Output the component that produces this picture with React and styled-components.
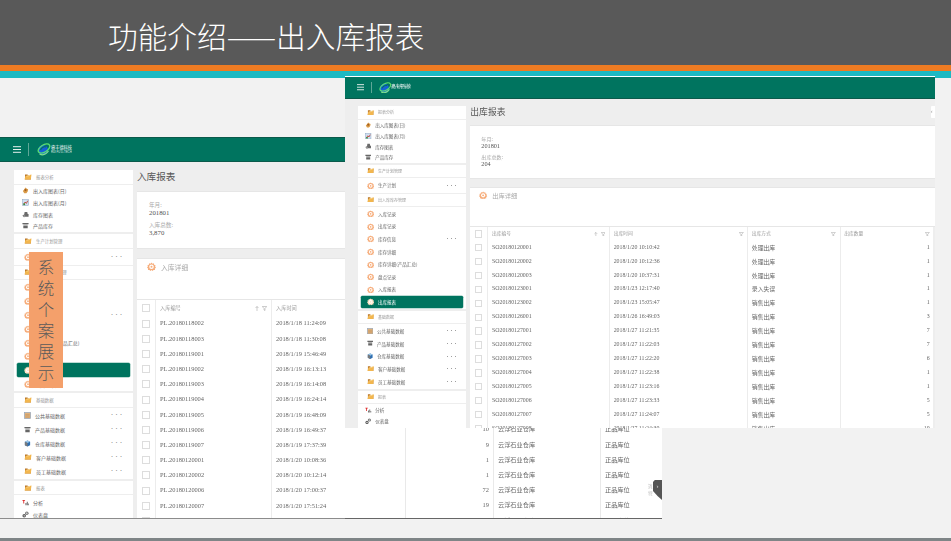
import React from "react";
import styled, { createGlobalStyle } from "styled-components";

const Global = createGlobalStyle`
  html, body { margin: 0; padding: 0; background: #f2f2f2; }
  body { width: 951px; height: 541px; overflow: hidden; font-family: "Noto Sans CJK SC", "Liberation Sans", sans-serif; }
`;

const CJK = `"Noto Sans CJK SC", "Liberation Sans", sans-serif`;
const SERIF = `"Liberation Serif", "Noto Sans CJK SC", serif`;

const Slide = styled.div`
  width: 951px; height: 541px; display: flex; flex-direction: column; background: #f2f2f2;
`;
const Banner = styled.header`
  height: 65px; flex: none; background: #595959; color: #fff; display: flex; align-items: center;
  padding: 0 0 0 108px; box-sizing: border-box;
`;
const SlideTitle = styled.h1`
  margin: 6px 0 0; font: 300 29.7px/1 ${CJK}; white-space: nowrap;
`;
const Stripe = styled.div`
  height: ${p => p.$h}px; flex: none; background: ${p => p.$c};
`;
const Canvas = styled.main`
  position: relative; height: 460px; flex: none;
`;
const Footer = styled.div`
  height: 3px; flex: none; background: #7f8587;
`;

/* A pasted screenshot on the slide */
const Shot = styled.section`
  position: absolute; left: ${p => p.$x}px; top: ${p => p.$y}px; width: ${p => p.$w}px; height: ${p => p.$h}px;
  overflow: hidden; filter: blur(0.3px); z-index: ${p => p.$z};
  box-sizing: border-box;
  border-top: ${p => p.$topLine || "none"};
  border-bottom: ${p => p.$bottomLine || "none"};
`;
const ShotInner = styled.div`
  zoom: ${p => p.$zoom}; width: ${p => p.$w}px; background: #eeeeee; min-height: 100%;
`;
const TopBar = styled.div`
  height: ${p => p.$h}px; background: #00745f; border-bottom: 1px solid #0b5a4b; box-sizing: border-box;
  display: flex; align-items: center; padding-left: 13px;
`;
const Divider = styled.span`
  width: 1px; height: 13px; background: #5fa797; margin: 0 7px 0 7px;
`;
const LogoText = styled.div`
  color: #fff; margin-left: 0; display: flex; flex-direction: column; gap: .5px;
`;
const LogoCn = styled.span` font-size: 4.2px; line-height: 4.6px; white-space: nowrap; `;
const LogoEn = styled.span` font: 2.8px/3px "Liberation Sans", sans-serif; white-space: nowrap; opacity: .85; `;

const Body = styled.div`
  display: flex; align-items: flex-start; padding: 8px 0 0 14px;
`;
const Sidebar = styled.aside`
  width: 118.5px; flex: none; display: flex; flex-direction: column;
`;
const GroupHead = styled.div`
  height: 13.5px; background: #fff; margin-bottom: 1px; display: flex; align-items: center; padding-left: 10px;
  color: #999; font-size: 4.4px; gap: 4px; white-space: nowrap;
`;
const GroupList = styled.ul`
  list-style: none; margin: 0 0 ${p => p.$gap}px; padding: ${p => p.$pad}px 0; background: #fff;
`;
const Item = styled.li`
  height: ${p => p.$h}px; display: flex; align-items: center; gap: 4px;
  padding: 0 9px 0 ${p => p.$tight ? 8 : 10}px; font-size: 5px; color: ${p => p.$active ? "#fff" : "#666"};
  white-space: nowrap; box-sizing: border-box;
  margin: 0 ${p => p.$active ? 3 : 0}px;
  ${p => p.$active && `background:#00745f; border-radius:1.5px; box-shadow:0 0 0 .5px #7db9ab; padding-left:7px;`}
`;
const ItemLabel = styled.span` flex: 1; `;
const Dots = styled.span`
  color: #444; font-size: 4px; letter-spacing: .5px; line-height: 1;
`;

const Main = styled.div`
  flex: 1; min-width: 0; margin-left: 4.5px; display: flex; flex-direction: column;
`;
const TitleRow = styled.div`
  height: 21px; display: flex; align-items: flex-start; justify-content: space-between;
`;
const PageTitle = styled.h2`
  margin: 1.5px 0 0; font: 400 9.6px/1 ${CJK}; color: #555;
`;
const Collapse = styled.span`
  width: 4.5px; height: 13px; background: #fff; border-radius: 1px 0 0 1px;
  font: 5px/13px "Liberation Sans", sans-serif; color: #888; overflow: hidden;
`;
const SummaryCard = styled.div`
  height: 58px; background: #fff; border: 1px solid #e6e6e6; border-width: 1px 0; box-sizing: border-box;
  padding: 9px 0 0 12px; margin-bottom: 9px;
`;
const FieldLabel = styled.div` font: 5.6px/8px ${CJK}; color: #aaa; `;
const FieldValue = styled.div` font: 6.8px/8px ${SERIF}; color: #555; margin-bottom: 4px; `;
const DetailHead = styled.div`
  height: ${p => p.$h}px; background: #fff; border-top: 1px solid #e6e6e6; border-bottom: 1px solid #e6e6e6; box-sizing: border-box;
  display: flex; align-items: flex-start; gap: 5px; padding: 3px 0 0 10px;
  font: 6.8px/10px ${CJK}; color: #aaa;
`;
const Table = styled.div` margin-right: 2px; background: #fff; `;
const Row = styled.div`
  display: grid; grid-template-columns: ${p => p.$cols}; height: ${p => p.$h}px;
`;
const Cell = styled.div`
  border-left: 1px solid #ececec; display: flex; align-items: center; gap: 2px; min-width: 0;
  padding: 0 4px; box-sizing: border-box; white-space: nowrap;
  font: 6.4px/1 ${p => p.$cjk ? CJK : SERIF}; color: #666;
  justify-content: ${p => p.$right ? "flex-end" : "flex-start"};
  &:first-child { border-left: none; padding: 0; justify-content: center; }
`;
const HeadCell = styled(Cell)`
  font: 5.2px/1 ${CJK}; color: #999; justify-content: space-between;
`;
const HeadTools = styled.span` display: flex; align-items: center; gap: 3px; `;
const Check = styled.span`
  width: 8px; height: 8px; background: #fff; border: .7px solid #ddd; box-sizing: border-box;
`;

const Callout = styled.aside`
  position: absolute; left: 29px; top: 174px; width: 34px; height: 136px; z-index: 5;
  background: #f4a06b; color: #5a5a5a; box-sizing: border-box; padding-top: 5px;
  display: flex; flex-direction: column; align-items: center;
  font: 300 16.5px/21px ${CJK};
`;

const StockTable = styled.div` margin-top: -6px; `;
const StockRow = styled.div`
  display: grid; grid-template-columns: 60px 88px 107px 62px; height: 15.2px;
`;
const StockCell = styled.div`
  border-left: ${p => p.$first ? "none" : "1px solid #e9e9e9"}; box-sizing: border-box; white-space: nowrap;
  display: flex; align-items: center; padding: 0 4px; color: #666;
  font: ${p => p.$cjk ? `6.2px/1 ${CJK}` : `6.4px/1 ${SERIF}`};
  justify-content: ${p => p.$right ? "flex-end" : "flex-start"};
`;
const PanelBody = styled.div` background: #fff; height: 100%; position: relative; overflow: hidden; `;
const HelpTab = styled.div`
  position: absolute; right: 0; top: 52px; width: 9px; height: 20px; background: #555;
  clip-path: polygon(20% 0, 100% 0, 100% 100%, 50% 80%, 0 55%, 0 10%);
  color: #ddd; font: 6px/12px "Liberation Sans", sans-serif; text-align: center;
`;
const HelpHint = styled.div`
  position: absolute; right: 9px; top: 55px; color: #bbb; font: 4.5px/7px ${CJK}; width: 5px; overflow: hidden;
  white-space: nowrap;
`;

const Gear = ({ c = "#f6ad7b", s = 8 }) => (
  <svg width={s} height={s} viewBox="0 0 16 16" style={{ flex: "none" }}>
    <path d="M8 1l1.6 2 2.5-.7.6 2.5 2.5.8-.8 2.4 1.6 2-2 1.6.2 2.6-2.6.2L10 16 8 14.4 6 16l-1.6-1.600-2.600-.2.2-2.600-2-1.600 1.600-2-.8-2.400 2.500-.8.6-2.500L6.400 3z" fill={c} />
    <circle cx="8" cy="8.500" r="4" fill="#fff" />
    <circle cx="8" cy="8.500" r="1.800" fill={c} />
  </svg>
);
const Folder = ({ s = 8 }) => (
  <svg width={s} height={s} viewBox="0 0 16 16" style={{ flex: "none" }}>
    <path d="M2 3h5l1 1.500h6V13H2z" fill="#b9772a" />
    <path d="M3 6l12-3-1.500 10H1z" fill="#f2b64e" />
    <path d="M5 6.500l7-1.800" stroke="#fff3cf" strokeWidth="1" />
  </svg>
);
const Cube = () => (
  <svg width="7" height="7" viewBox="0 0 16 16" style={{ flex: "none" }}>
    <path d="M8 1l6 3v8l-6 3-6-3V4z" fill="#2d6fb3" />
    <path d="M8 1l6 3-6 3-6-3z" fill="#9cc7e8" />
    <path d="M2 4l6 3v8l-6-3z" fill="#7a7a7a" />
  </svg>
);
const Shelf = () => (
  <svg width="7" height="7" viewBox="0 0 16 16" style={{ flex: "none" }}>
    <path d="M1 2h14v3H1zM3 6h10v2H3zM3 9h10v5H3z" fill="#666" />
  </svg>
);
const Chart = () => (
  <svg width="7" height="7" viewBox="0 0 16 16" style={{ flex: "none" }}>
    <rect x="1" y="1" width="14" height="14" fill="#cfe0f2" stroke="#7f9ab8" />
    <path d="M4 12l3-5 3 3 3-6" stroke="#c0392b" strokeWidth="2" fill="none" />
    <rect x="3" y="10" width="4" height="4" fill="#3c8d40" />
  </svg>
);
const Ledger = () => (
  <svg width="7" height="7" viewBox="0 0 16 16" style={{ flex: "none" }}>
    <rect x="1" y="1" width="14" height="14" fill="#e0b27c" stroke="#8fa4bd" strokeWidth="1.500" />
    <path d="M3 6h10M3 9h10M3 12h10" stroke="#b98a55" />
  </svg>
);
const Cookie = () => (
  <svg width="7" height="7" viewBox="0 0 16 16" style={{ flex: "none" }}>
    <path d="M8 1l3 3 3 1-1 5-3 4H5L2 9l2-2z" fill="#d99a46" />
    <circle cx="8" cy="7" r="2.500" fill="#a35f22" />
  </svg>
);
const Pour = () => (
  <svg width="7" height="7" viewBox="0 0 16 16" style={{ flex: "none" }}>
    <path d="M6 2h6l1 5h2v6H3l-2-3 4-2z" fill="#6b6b6b" />
    <circle cx="5" cy="12" r="2.500" fill="#999" />
  </svg>
);
const Tally = () => (
  <svg width="7" height="7" viewBox="0 0 16 16" style={{ flex: "none" }}>
    <path d="M1 2h6v2H5v6H3V4H1z" fill="#d22" />
    <path d="M8 14V9h2v5zM11 14V6h2v8zM14 14v-4h1.500v4z" fill="#555" />
  </svg>
);
const Dash = () => (
  <svg width="7" height="7" viewBox="0 0 16 16" style={{ flex: "none" }}>
    <circle cx="5" cy="11" r="4" fill="#555" />
    <circle cx="11" cy="5" r="4" fill="#777" />
    <circle cx="5" cy="11" r="1.500" fill="#fff" />
    <circle cx="11" cy="5" r="1.500" fill="#fff" />
  </svg>
);
const Funnel = () => (
  <svg width="5" height="5" viewBox="0 0 10 10"><path d="M.5 1h9L6 5v4L4 8V5z" fill="none" stroke="#999" /></svg>
);
const SortUp = () => (
  <svg width="4" height="5" viewBox="0 0 8 10"><path d="M4 10V1M1 4l3-3 3 3" fill="none" stroke="#999" /></svg>
);
const Burger = () => (
  <svg width="8" height="7" viewBox="0 0 8 7" style={{ flex: "none" }}>
    <path d="M0 .7h8M0 3.500h8M0 6.300h8" stroke="#e8f1ee" strokeWidth="1" />
  </svg>
);
const Logo = () => (
  <svg width="15" height="13" viewBox="0 0 30 26" style={{ flex: "none" }}>
    <circle cx="14" cy="14" r="10" fill="#1560d8" />
    <ellipse cx="16" cy="11" rx="13" ry="7" transform="rotate(-32 16 11)" fill="none" stroke="#5be070" strokeWidth="2.600" />
    <path d="M9 14c2-5 8-8 11-6" fill="none" stroke="#00745f" strokeWidth="2.500" />
    <path d="M7 22c6 3 13 1 18-6" fill="none" stroke="#7fe08a" strokeWidth="2.400" />
  </svg>
);

const ReportPanel = ({ cfg }) => {
  const first = cfg.active === "in" ? "入库" : "出库";
  const L = cfg.groupRow;
  return (
    <ShotInner $zoom={cfg.zoom} $w={cfg.innerW}>
      <TopBar $h={cfg.barH}>
        <Burger />
        <Divider />
        <Logo />
        <LogoText>
          <LogoCn>睿丰德科技</LogoCn>
          <LogoEn>RUI FU D-TECH</LogoEn>
        </LogoText>
      </TopBar>
      <Body>
        <Sidebar>
          <GroupHead><Folder />报表分析</GroupHead>
          <GroupList $pad={0.6} $gap={2}>
            <Item $h={11.6} $tight><Cookie /><ItemLabel>出入库图表(日)</ItemLabel></Item>
            <Item $h={11.6} $tight><Chart /><ItemLabel>出入库图表(月)</ItemLabel></Item>
            <Item $h={11.6} $tight><Pour /><ItemLabel>库存图表</ItemLabel></Item>
            <Item $h={11.6} $tight><Shelf /><ItemLabel>产品库存</ItemLabel></Item>
          </GroupList>
          <GroupHead><Folder />生产计划管理</GroupHead>
          <GroupList $pad={0} $gap={1}>
            <Item $h={16}><Gear /><ItemLabel>生产计划</ItemLabel><Dots>•••</Dots></Item>
          </GroupList>
          <GroupHead><Folder />出入库库存管理</GroupHead>
          <GroupList $pad={0.5} $gap={2}>
            {["入库记录", "出库记录", "库存信息", "库存详细", "库存详细(产品汇总)", "盘点记录", "入库报表", "出库报表"].map(t => {
              const on = t === first + "报表";
              return (
                <Item key={t} $h={L} $active={on}>
                  <Gear c={on ? "#ffe3c4" : "#f6ad7b"} />
                  <ItemLabel>{t}</ItemLabel>
                  {t === "库存信息" && <Dots>•••</Dots>}
                </Item>
              );
            })}
          </GroupList>
          <GroupHead><Folder />基础数据</GroupHead>
          <GroupList $pad={0.5} $gap={2}>
            {[["公共基础数据", <Ledger key="a" />], ["产品基础数据", <Shelf key="b" />], ["仓库基础数据", <Cube key="c" />], ["客户基础数据", <Folder key="d" />], ["员工基础数据", <Folder key="e" />]].map(([t, ic]) => (
              <Item key={t} $h={14}>{ic}<ItemLabel>{t}</ItemLabel><Dots>•••</Dots></Item>
            ))}
          </GroupList>
          <GroupHead><Folder />报表</GroupHead>
          <GroupList $pad={1} $gap={0}>
            <Item $h={12} $tight><Tally /><ItemLabel>分析</ItemLabel></Item>
            <Item $h={12} $tight><Dash /><ItemLabel>仪表盘</ItemLabel></Item>
          </GroupList>
        </Sidebar>
        <Main>
          <TitleRow>
            <PageTitle>{first}报表</PageTitle>
            <Collapse>‹</Collapse>
          </TitleRow>
          <SummaryCard>
            <FieldLabel>年月:</FieldLabel>
            <FieldValue>201801</FieldValue>
            <FieldLabel>{first}总数:</FieldLabel>
            <FieldValue>{cfg.total}</FieldValue>
          </SummaryCard>
          <DetailHead $h={cfg.detailH}><Gear s={9} /><span>{first}详细</span></DetailHead>
          <Table>
            <Row $cols={cfg.cols} $h={cfg.headH}>
              <HeadCell><Check /></HeadCell>
              {cfg.head.map((h, i) => (
                <HeadCell key={h}>
                  {h}
                  <HeadTools>{i === 0 && <SortUp />}<Funnel /></HeadTools>
                </HeadCell>
              ))}
            </Row>
            {cfg.rows.map(r => (
              <Row key={r[0]} $cols={cfg.cols} $h={cfg.rowH}>
                <Cell><Check /></Cell>
                <Cell>{r[0]}</Cell>
                <Cell>{r[1]}</Cell>
                {r[2] && <Cell $cjk>{r[2]}</Cell>}
                {r[3] && <Cell $right>{r[3]}</Cell>}
              </Row>
            ))}
          </Table>
        </Main>
      </Body>
    </ShotInner>
  );
};

const inRows = [
  ["PL.20180118002", "2018/1/18 11:24:09"], ["PL.20180118003", "2018/1/18 11:30:08"],
  ["PL.20180119001", "2018/1/19 15:46:49"], ["PL.20180119002", "2018/1/19 16:13:13"],
  ["PL.20180119003", "2018/1/19 16:14:08"], ["PL.20180119004", "2018/1/19 16:24:14"],
  ["PL.20180119005", "2018/1/19 16:48:09"], ["PL.20180119006", "2018/1/19 16:49:37"],
  ["PL.20180119007", "2018/1/19 17:37:39"], ["PL.20180120001", "2018/1/20 10:08:36"],
  ["PL.20180120002", "2018/1/20 10:12:14"], ["PL.20180120006", "2018/1/20 17:00:37"],
  ["PL.20180120007", "2018/1/20 17:51:24"], ["PL.20180120008", "2018/1/20 17:52:10"],
];
const outRows = [
  ["SO20180120001", "2018/1/20 10:10:42", "处理出库", "1"], ["SO20180120002", "2018/1/20 10:12:36", "处理出库", "1"],
  ["SO20180120003", "2018/1/20 10:37:31", "处理出库", "1"], ["SO20180123001", "2018/1/23 12:17:40", "录入失误", "1"],
  ["SO20180123002", "2018/1/23 15:05:47", "销售出库", "1"], ["SO20180126001", "2018/1/26 16:49:03", "销售出库", "3"],
  ["SO20180127001", "2018/1/27 11:21:35", "销售出库", "7"], ["SO20180127002", "2018/1/27 11:22:03", "销售出库", "7"],
  ["SO20180127003", "2018/1/27 11:22:20", "销售出库", "6"], ["SO20180127004", "2018/1/27 11:22:38", "销售出库", "1"],
  ["SO20180127005", "2018/1/27 11:23:16", "销售出库", "1"], ["SO20180127006", "2018/1/27 11:23:33", "销售出库", "5"],
  ["SO20180127007", "2018/1/27 11:24:07", "销售出库", "5"], ["SO20180127008", "2018/1/27 11:24:30", "销售出库", "10"],
];
const inCfg = {
  active: "in", zoom: 1, innerW: 560, barH: 24, groupRow: 13.8, total: "3,870", detailH: 42,
  cols: "18px 116px 1fr", head: ["入库编号", "入库时间"], headH: 16, rowH: 15.2, rows: inRows,
};
const outCfg = {
  active: "out", zoom: 0.915, innerW: 645, barH: 24, groupRow: 13.8, total: "204", detailH: 44,
  cols: "18.6px 133px 151px 101px 1fr", head: ["出库编号", "出库时间", "出库方式", "出库数量"], headH: 15, rowH: 15.2, rows: outRows,
};
const stock = ["10", "9", "1", "1", "72", "19", "6"];

export default function App() {
  return (
    <Slide>
      <Global />
      <Banner><SlideTitle>功能介绍——出入库报表</SlideTitle></Banner>
      <Stripe $h={6} $c="#ee7b22" />
      <Stripe $h={7} $c="#1cb9c3" />
      <Canvas>
        <Shot $x={0} $y={59} $w={345} $h={382} $z={1} $topLine="1px solid #0b5a4b" $bottomLine="1px solid #8c8c8c">
          <ReportPanel cfg={inCfg} />
        </Shot>
        <Shot $x={345} $y={-2} $w={590} $h={352} $z={2} $topLine="1px solid #fff">
          <ReportPanel cfg={outCfg} />
        </Shot>
        <Shot $x={345} $y={350} $w={317} $h={91} $z={3} $bottomLine="1px solid #666">
          <PanelBody>
            <StockTable>
              {stock.map((n, i) => (
                <StockRow key={i}>
                  <StockCell $first />
                  <StockCell $right>{n}</StockCell>
                  <StockCell $cjk>云浮石业仓库</StockCell>
                  <StockCell $cjk>正品库位</StockCell>
                </StockRow>
              ))}
            </StockTable>
            <HelpHint>消息<br />特别</HelpHint>
            <HelpTab>›</HelpTab>
          </PanelBody>
        </Shot>
        <Callout>
          {"系统个案展示".split("").map(ch => <span key={ch}>{ch}</span>)}
        </Callout>
      </Canvas>
      <Footer />
    </Slide>
  );
}
